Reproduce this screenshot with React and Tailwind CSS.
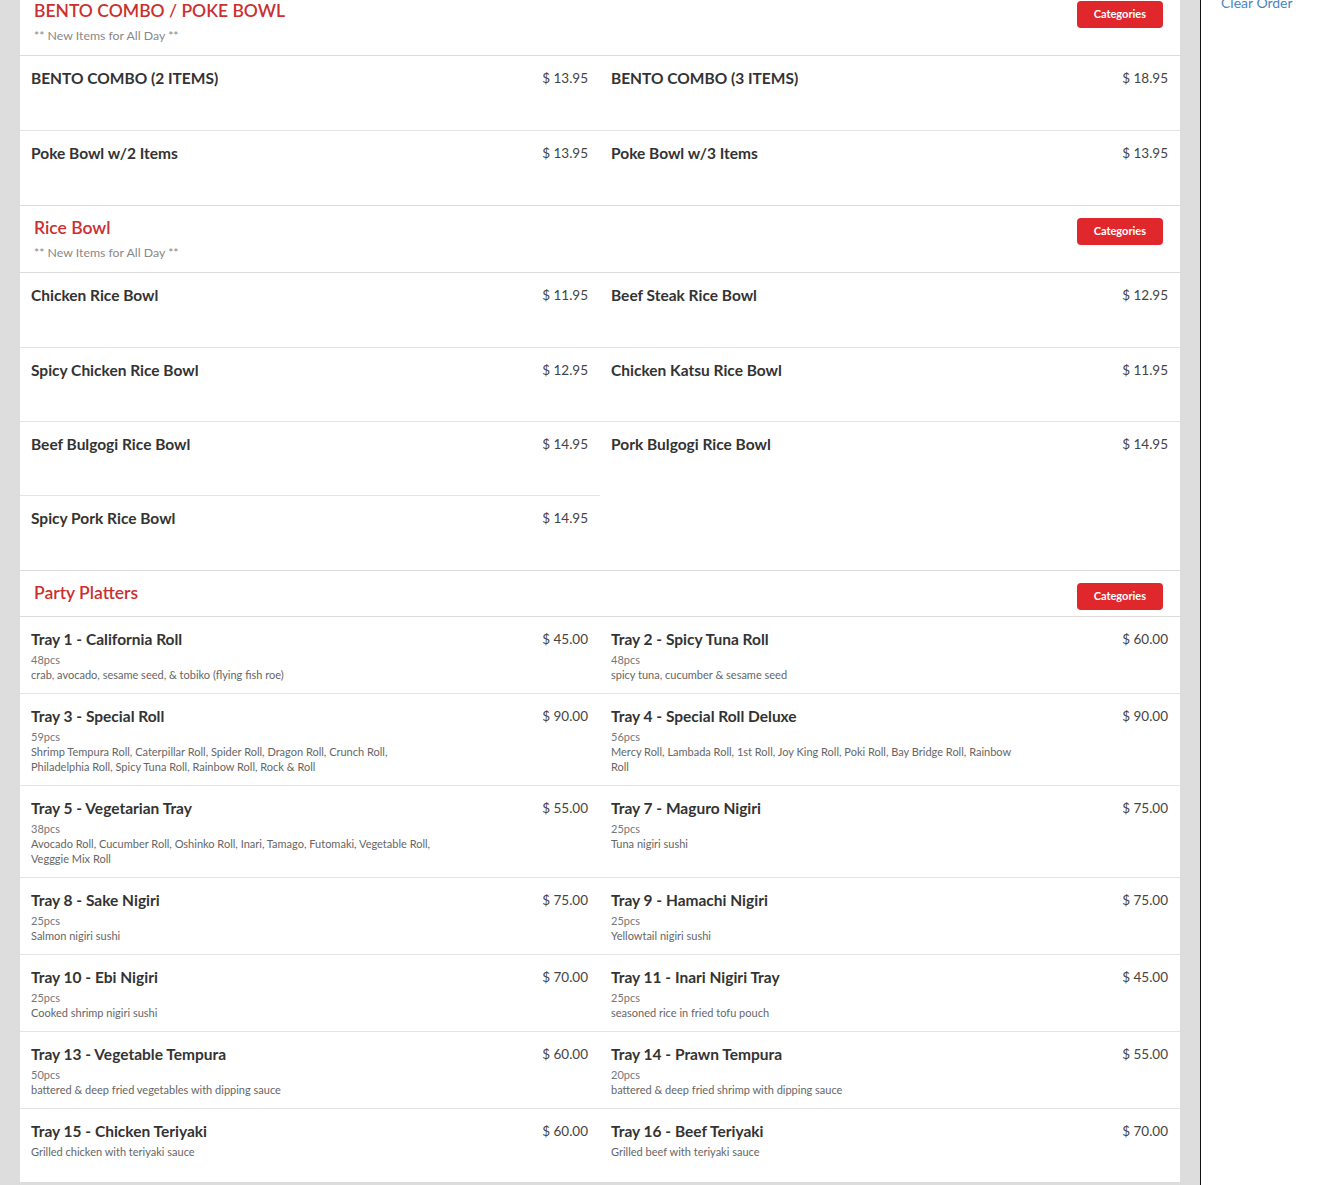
import React from "react";

const sections = [
  {
    title: "BENTO COMBO / POKE BOWL",
    subtitle: "** New Items for All Day **",
    items: [
      { name: "BENTO COMBO (2 ITEMS)", price: "13.95" },
      { name: "BENTO COMBO (3 ITEMS)", price: "18.95" },
      { name: "Poke Bowl w/2 Items", price: "13.95" },
      { name: "Poke Bowl w/3 Items", price: "13.95" },
    ],
  },
  {
    title: "Rice Bowl",
    subtitle: "** New Items for All Day **",
    items: [
      { name: "Chicken Rice Bowl", price: "11.95" },
      { name: "Beef Steak Rice Bowl", price: "12.95" },
      { name: "Spicy Chicken Rice Bowl", price: "12.95" },
      { name: "Chicken Katsu Rice Bowl", price: "11.95" },
      { name: "Beef Bulgogi Rice Bowl", price: "14.95" },
      { name: "Pork Bulgogi Rice Bowl", price: "14.95" },
      { name: "Spicy Pork Rice Bowl", price: "14.95" },
    ],
  },
  {
    title: "Party Platters",
    items: [
      { name: "Tray 1 - California Roll", price: "45.00", pcs: "48pcs", desc: "crab, avocado, sesame seed, & tobiko (flying fish roe)" },
      { name: "Tray 2 - Spicy Tuna Roll", price: "60.00", pcs: "48pcs", desc: "spicy tuna, cucumber & sesame seed" },
      {
        name: "Tray 3 - Special Roll",
        price: "90.00",
        pcs: "59pcs",
        desc: "Shrimp Tempura Roll, Caterpillar Roll, Spider Roll, Dragon Roll, Crunch Roll, Philadelphia Roll, Spicy Tuna Roll, Rainbow Roll, Rock & Roll",
      },
      {
        name: "Tray 4 - Special Roll Deluxe",
        price: "90.00",
        pcs: "56pcs",
        desc: "Mercy Roll, Lambada Roll, 1st Roll, Joy King Roll, Poki Roll, Bay Bridge Roll, Rainbow Roll",
      },
      {
        name: "Tray 5 - Vegetarian Tray",
        price: "55.00",
        pcs: "38pcs",
        desc: "Avocado Roll, Cucumber Roll, Oshinko Roll, Inari, Tamago, Futomaki, Vegetable Roll, Vegggie Mix Roll",
      },
      { name: "Tray 7 - Maguro Nigiri", price: "75.00", pcs: "25pcs", desc: "Tuna nigiri sushi" },
      { name: "Tray 8 - Sake Nigiri", price: "75.00", pcs: "25pcs", desc: "Salmon nigiri sushi" },
      { name: "Tray 9 - Hamachi Nigiri", price: "75.00", pcs: "25pcs", desc: "Yellowtail nigiri sushi" },
      { name: "Tray 10 - Ebi Nigiri", price: "70.00", pcs: "25pcs", desc: "Cooked shrimp nigiri sushi" },
      { name: "Tray 11 - Inari Nigiri Tray", price: "45.00", pcs: "25pcs", desc: "seasoned rice in fried tofu pouch" },
      { name: "Tray 13 - Vegetable Tempura", price: "60.00", pcs: "50pcs", desc: "battered & deep fried vegetables with dipping sauce" },
      { name: "Tray 14 - Prawn Tempura", price: "55.00", pcs: "20pcs", desc: "battered & deep fried shrimp with dipping sauce" },
      { name: "Tray 15 - Chicken Teriyaki", price: "60.00", desc: "Grilled chicken with teriyaki sauce" },
      { name: "Tray 16 - Beef Teriyaki", price: "70.00", desc: "Grilled beef with teriyaki sauce" },
    ],
  },
];

function MenuItem({ item, first }) {
  return (
    <div
      className={
        "flex min-h-[74.3px] pl-[11px] pr-3 pt-3 pb-[11px] " +
        (first ? "" : "border-t border-[#e4e4e4]")
      }
    >
      <div className="flex-1">
        <div className="text-[15.5px] font-bold leading-5 text-[#333]">{item.name}</div>
        {(item.pcs || item.desc) && (
          <div className="mt-[3px] max-w-[410px] text-[11px] leading-[15px] text-[#666]">
            {item.pcs && <div className="text-[#777]">{item.pcs}</div>}
            {item.desc && <div>{item.desc}</div>}
          </div>
        )}
      </div>
      <div className="shrink-0 text-[13.5px] leading-5 text-[#444]">$ {item.price}</div>
    </div>
  );
}

function Section({ section, last }) {
  return (
    <div className={"bg-white border-t border-[#dcdcdc] " + (last ? "border-b" : "")}>
      <div
        className={
          "flex items-start justify-between border-b border-[#dcdcdc] pl-[14px] pr-[17px] pt-[11px] " +
          (section.subtitle ? "pb-[11px]" : "pb-3")
        }
      >
        <div>
          <h2 className="text-[17.5px] font-semibold leading-[22px] text-[#cc2f2f]">{section.title}</h2>
          {section.subtitle && (
            <div className="mt-[6px] text-[12.3px] leading-4 text-[#888]">{section.subtitle}</div>
          )}
        </div>
        <button className="mt-px -mb-[6px] h-[27px] rounded-[4px] bg-[#e0282c] px-[17px] text-[11px] font-bold text-white">
          Categories
        </button>
      </div>
      <div className="grid grid-cols-2">
        {section.items.map((item, i) => (
          <MenuItem key={item.name} item={item} first={i < 2} />
        ))}
      </div>
    </div>
  );
}

export default function App() {
  return (
    <div
      className="flex h-[1185px] overflow-hidden bg-white"
      style={{ fontFamily: "Lato, 'Open Sans', sans-serif" }}
    >
      <div className="w-[1200px] shrink-0 bg-[#dddddd] px-5">
        <div className="-mt-[12px]">
          {sections.map((s, i) => (
            <Section key={s.title} section={s} last={i === sections.length - 1} />
          ))}
        </div>
      </div>
      <div className="flex-1 border-l border-[#111] bg-white px-5">
        <a href="#" className="-mt-[7px] block text-sm leading-5 text-[#4a86c3]">
          Clear Order
        </a>
      </div>
    </div>
  );
}
